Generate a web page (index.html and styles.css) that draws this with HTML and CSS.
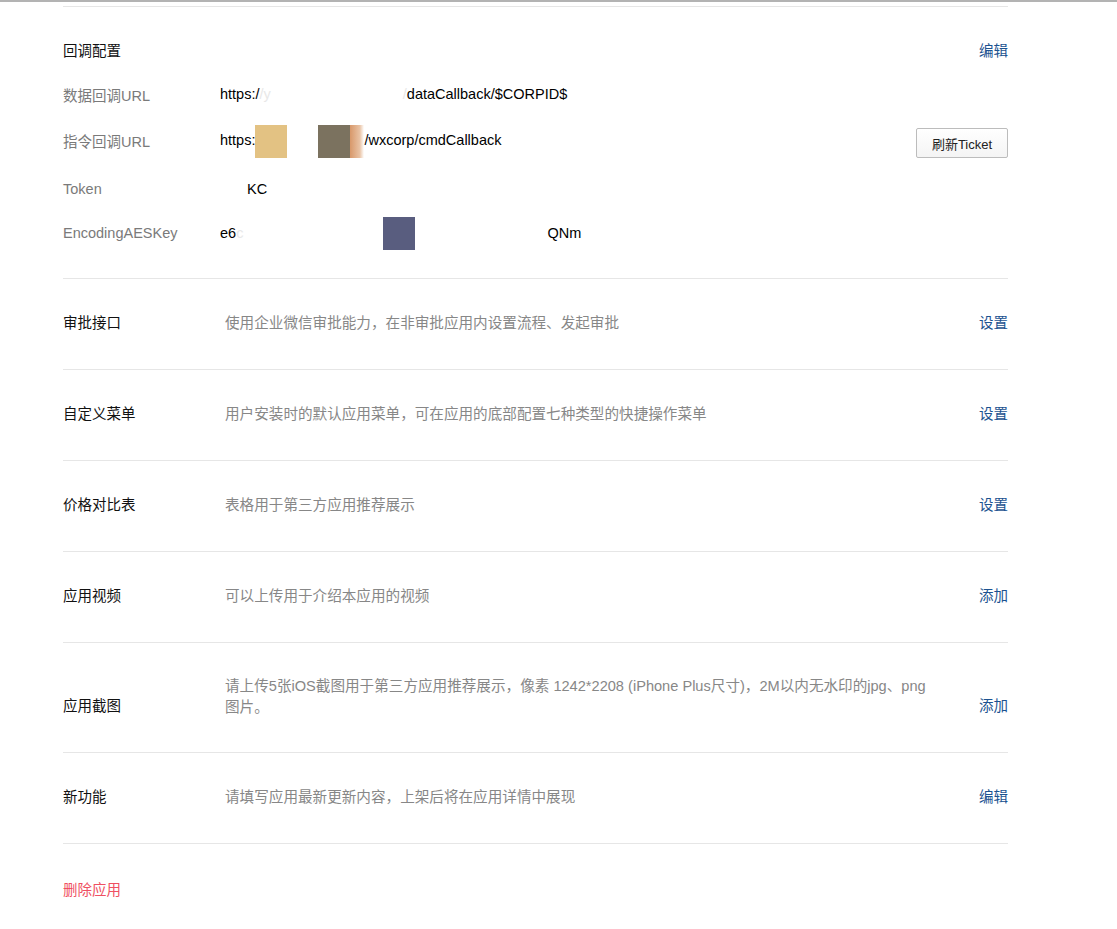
FILE: index.html
```html
<!DOCTYPE html>
<html lang="zh-CN">
<head>
<meta charset="utf-8">
<title>应用配置</title>
<link rel="stylesheet" href="styles.css">
</head>
<body>
<div class="page">
  <div class="content">
    <section class="callback">
      <div class="cb-head">
        <span class="title">回调配置</span>
        <a class="action">编辑</a>
      </div>
      <div class="cb-row cb-first">
        <span class="cb-label">数据回调URL</span>
        <span class="cb-value">https:/<span class="faint">/y</span><span class="gap g1"></span><span class="faint">/</span>dataCallback/$CORPID$</span>
      </div>
      <div class="cb-row cb-row-btn">
        <span class="cb-label">指令回调URL</span>
        <span class="cb-value">https:<span class="blot tan"></span><span class="gap g2"></span><span class="blot grey"></span><span class="blot orange"></span>/wxcorp/cmdCallback</span>
        <button class="btn">刷新Ticket</button>
      </div>
      <div class="cb-row">
        <span class="cb-label">Token</span>
        <span class="cb-value"><span class="gap g3"></span>KC</span>
      </div>
      <div class="cb-row">
        <span class="cb-label">EncodingAESKey</span>
        <span class="cb-value">e6<span class="faint">c</span><span class="gap g4"></span><span class="blot slate"></span><span class="gap g5"></span>QNm</span>
      </div>
    </section>

    <div class="item">
      <span class="item-label">审批接口</span>
      <span class="item-desc">使用企业微信审批能力，在非审批应用内设置流程、发起审批</span>
      <a class="action">设置</a>
    </div>
    <div class="item">
      <span class="item-label">自定义菜单</span>
      <span class="item-desc">用户安装时的默认应用菜单，可在应用的底部配置七种类型的快捷操作菜单</span>
      <a class="action">设置</a>
    </div>
    <div class="item">
      <span class="item-label">价格对比表</span>
      <span class="item-desc">表格用于第三方应用推荐展示</span>
      <a class="action">设置</a>
    </div>
    <div class="item">
      <span class="item-label">应用视频</span>
      <span class="item-desc">可以上传用于介绍本应用的视频</span>
      <a class="action">添加</a>
    </div>
    <div class="item item-tall">
      <span class="item-label">应用截图</span>
      <span class="item-desc">请上传5张iOS截图用于第三方应用推荐展示，像素 1242*2208 (iPhone Plus尺寸)，2M以内无水印的jpg、png图片。</span>
      <a class="action">添加</a>
    </div>
    <div class="item">
      <span class="item-label">新功能</span>
      <span class="item-desc">请填写应用最新更新内容，上架后将在应用详情中展现</span>
      <a class="action">编辑</a>
    </div>

    <div class="danger"><a class="delete">删除应用</a></div>
  </div>
</div>
</body>
</html>
```

FILE: styles.css
```css
* { box-sizing: border-box; }
html, body { margin: 0; padding: 0; background: #fff; }
body {
  font-family: "Liberation Sans", "Noto Sans CJK SC", sans-serif;
  font-size: 14px;
  color: #000;
}
.page {
  border-top: 2px solid #b3b3b3;
  padding-top: 4px;
}
.content {
  width: 945px;
  margin-left: 63px;
}
.callback {
  border-top: 1px solid #e6e6e6;
  border-bottom: 1px solid #e6e6e6;
  padding: 34px 0 35px;
  display: flex;
  flex-direction: column;
  gap: 24px;
}
.cb-head {
  display: flex;
  justify-content: space-between;
  align-items: center;
  height: 21px;
  line-height: 21px;
}
.cb-first { margin-top: -2px; }
.title { font-size: 14.5px; line-height: 21px; color: #111; }
.action {
  font-size: 14.5px;
  color: #1c5290;
  cursor: pointer;
  line-height: 21px;
}
.cb-row {
  display: flex;
  align-items: center;
  height: 20px;
}
.cb-row-btn { height: 30px; margin-bottom: -3px; }
.cb-label {
  width: 157px;
  color: #7a7a7a;
  font-size: 14.5px;
}
.cb-row-btn .cb-label { margin-top: -6px; }
.cb-value {
  flex: 1;
  color: #000;
  font-size: 14.5px;
  white-space: nowrap;
  line-height: 20px;
}
.cb-row-btn .cb-value { margin-top: -5px; }
.faint { color: #e8e8e8; }
.gap { display: inline-block; height: 1px; }
.g1 { width: 132px; }
.g2 { width: 31px; }
.g3 { width: 27px; }
.g4 { width: 140px; }
.g5 { width: 132px; }
.blot {
  display: inline-block;
  vertical-align: middle;
  height: 33px;
  margin: -7px 0;
}
.tan { width: 32px; background: #e3c283; }
.grey { width: 32px; background: #7b725f; }
.orange { width: 14px; background: linear-gradient(90deg, #d8986a, #e9c3a5 70%, #fff); }
.slate { width: 32px; background: #595d7f; }
.btn {
  width: 92px;
  height: 30px;
  border: 1px solid #bcbcbc;
  border-radius: 2px;
  background: linear-gradient(#ffffff, #f4f4f4);
  font-family: "Liberation Sans", "Noto Sans CJK SC", sans-serif;
  font-size: 13px;
  color: #222;
  padding: 0;
}
.item {
  display: flex;
  align-items: center;
  border-bottom: 1px solid #e6e6e6;
  padding: 34px 0 35px;
}
.item-label {
  width: 162px;
  flex: none;
  font-size: 14.5px;
  line-height: 21px;
  color: #111;
}
.item-desc {
  flex: 1;
  font-size: 14.6px;
  line-height: 21px;
  color: #878787;
  padding-right: 46px;
}
.item-tall { padding: 33px 0 34px; }
.item-tall .item-label,
.item-tall .action { padding-top: 18px; }
.danger {
  padding-top: 34px;
}
.delete {
  color: #ef5062;
  font-size: 14.5px;
  cursor: pointer;
}
```
